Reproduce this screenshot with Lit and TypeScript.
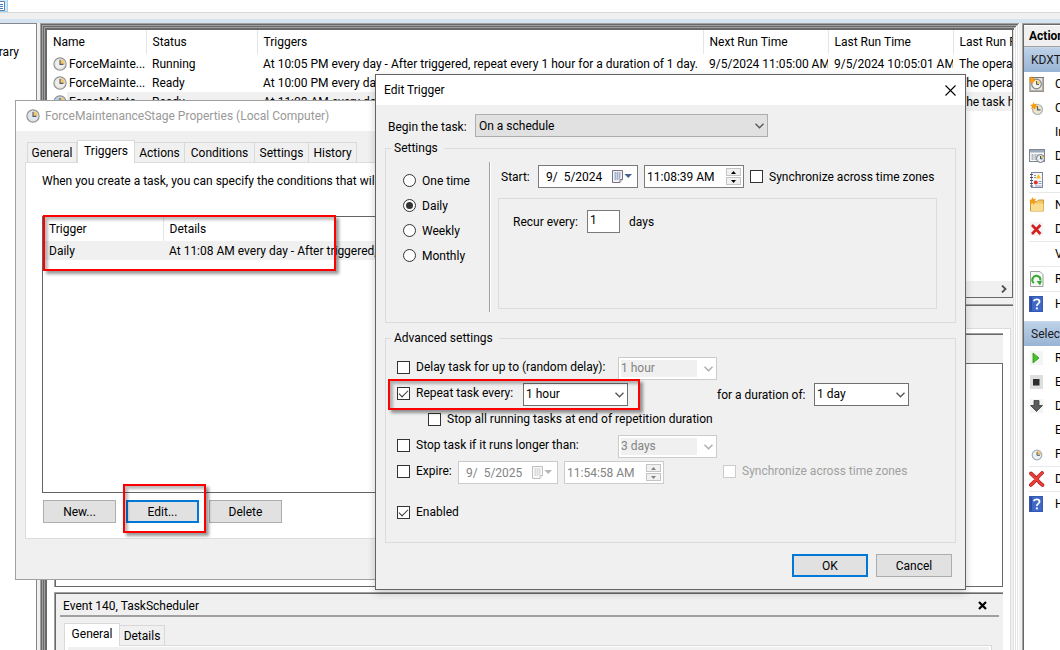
import { LitElement, html, css, svg, nothing } from "lit";
import { customElement, state } from "lit/decorators.js";
import { classMap } from "lit/directives/class-map.js";

const chevron = html`<svg class="chev" width="9" height="6" viewBox="0 0 9 6" aria-hidden="true"><path d="M.5 .8 4.5 4.8 8.5 .8" fill="none" stroke="currentColor" stroke-width="1.3"/></svg>`;

const clock = (face = "#f1efe8") => html`<svg width="14" height="14" viewBox="0 0 14 14" aria-hidden="true">
  <circle cx="7" cy="7" r="6.1" fill=${face} stroke="#8d8f92" stroke-width="1.2"/>
  <path d="M7 7V1.9A5.1 5.1 0 0 1 12.1 7Z" fill="#f4c66a"/>
  <circle cx="7" cy="7" r="4.9" fill="none" stroke="#d9dadb" stroke-width=".7"/>
  <path d="M7 3V7.4H10.4" fill="none" stroke="#4c5a70" stroke-width="1.1"/>
</svg>`;

const icon = (body: unknown) => html`<svg width="16" height="16" viewBox="0 0 16 16" aria-hidden="true">${body}</svg>`;
const spark = svg`<path d="M3.5 0 4.6 2.3 7 1.4 6 3.7 8 5 5.600 5.600 5 8 3.500 6 1 7 2 4.600 0 3 2.500 2.500Z" fill="#f59b14"/>`;
const help = icon(svg`<rect x=".5" y="0" width="13" height="16" fill="#3d68c8" stroke="#27459a" stroke-width=".8"/><path d="M1 1H3V15H1Z" fill="#2a4aa4"/><path d="M5 5.300C5 2.600 10.500 2.600 10.500 5.500 10.500 7.600 7.800 7.600 7.800 10" fill="none" stroke="#fff" stroke-width="1.800"/><rect x="6.900" y="11.400" width="1.900" height="2" fill="#fff"/>`);

const icons: Record<string, unknown> = {
  basic: icon(svg`<rect x="1" y="1.500" width="13.500" height="14" fill="#e9e6e1" stroke="#77716c"/><path d="M14 2V15H1" fill="none" stroke="#a79f97" stroke-width="1.500"/><circle cx="7.500" cy="8" r="4.800" fill="#f5f3ec" stroke="#7d8389" stroke-width="1.200"/><path d="M7.500 8V4.500A3.600 3.600 0 0 1 11 8Z" fill="#f4c66a"/><path d="M7.500 5V8.500H10" fill="none" stroke="#45607a"/><g transform="translate(-1 0)">${spark}</g>`),
  create: icon(svg`<circle cx="8.500" cy="9.500" r="5" fill="#f2e6c4" stroke="#a8b7c4" stroke-width="1.200"/><path d="M8.500 6V9.800H11.500" fill="none" stroke="#46617e" stroke-width="1.200"/><g transform="translate(1 2)">${spark}</g>`),
  running: icon(svg`<rect x=".5" y="1.500" width="15" height="12" fill="#f4f6f8" stroke="#7c8590"/><rect x="1" y="2" width="14" height="2.500" fill="#9aabbb"/><path d="M2.500 7H9M2.500 9H8M2.500 11H7" stroke="#737b84" stroke-dasharray="2 1"/><circle cx="11.500" cy="10.500" r="4" fill="#e9edf0" stroke="#6c7884"/><path d="M11.500 10.500V7.500A3 3 0 0 1 14.500 10.500Z" fill="#f4c66a"/><path d="M11.500 8V10.800H13.500" fill="none" stroke="#35506c"/>`),
  history: icon(svg`<rect x="2.500" y=".5" width="11" height="15" fill="#f7f8fb" stroke="#7b86a0"/><path d="M1 2.500H4M1 5.500H4M1 8.500H4M1 11.500H4M1 14H4" stroke="#4d5564"/><path d="M9.500 2 12 6.500H7Z" fill="#f5c322"/><circle cx="6.800" cy="10.500" r="2" fill="#d8352d"/><path d="M5 3.500H7M5 5.500H7M9.500 9.500H12.500M9.500 11.500H12.500M6 14H12.500" stroke="#8d9cbc"/>`),
  folder: icon(svg`<path d="M1.500 4.500H8L9.500 3H14.500V14H1.500Z" fill="#f1c865" stroke="#c99735"/><path d="M2 6.500H14.500V14H2Z" fill="#f9dc8d"/>${spark}`),
  remove: icon(svg`<rect x="1" y="1" width="13" height="14" fill="#f4f4f4"/><path d="M3 4 11.500 13M11.500 4 3 13" stroke="#d41f1f" stroke-width="2.600"/>`),
  refresh: icon(svg`<path d="M1.500 .5H11L14 3.500V15.500H1.500Z" fill="#f7f9f7" stroke="#9aa19a"/><path d="M5 12A4 4 0 1 1 11.300 9.500" fill="none" stroke="#3aa835" stroke-width="2"/><path d="M7.500 10H13L11 14.500Z" fill="#3aa835"/>`),
  help,
  run: icon(svg`<rect x="1" y="1" width="13" height="14" fill="#f4f4f4"/><path d="M4 3 10 8 4 13Z" fill="#45c22c" stroke="#2b961b" stroke-width=".8"/>`),
  end: icon(svg`<rect x="1" y="1" width="13" height="14" fill="#dedede"/><rect x="4" y="5" width="6.500" height="6.500" fill="#2d2d2d"/>`),
  disable: icon(svg`<rect x="1" y="1" width="13" height="14" fill="#f4f4f4"/><path d="M5 2.500H10V7.500H13.500L7.500 13.500 1.500 7.500H5Z" fill="#5c5c5c" stroke="#3d3d3d" stroke-width=".8"/>`),
  props: icon(svg`<circle cx="8" cy="9" r="4.800" fill="#eef1f3" stroke="#a3aebb" stroke-width="1.200"/><path d="M8 9V4.800A4.200 4.200 0 0 1 12.200 9Z" fill="#f4c66a"/><path d="M8 6V9.300H11" fill="none" stroke="#4a6480"/>`),
  del: icon(svg`<path d="M2 2.500Q5 5 7.500 8 10.500 12 13.500 14M13 2Q9.500 5 7 8.500 4.500 12 1.800 14" fill="none" stroke="#a51717" stroke-width="3.600" stroke-linecap="round"/><path d="M2 2.500Q5 5 7.500 8 10.500 12 13.500 14M13 2Q9.500 5 7 8.500 4.500 12 1.800 14" fill="none" stroke="#ea3f38" stroke-width="2.400" stroke-linecap="round"/>`),
};

type Action = { label: string; icon?: string; sep?: boolean };
const folderActions: Action[] = [
  { label: "Create Basic Task...", icon: "basic" },
  { label: "Create Task...", icon: "create" },
  { label: "Import Task..." },
  { label: "Display All Running Tasks", icon: "running" },
  { label: "Disable All Tasks History", icon: "history" },
  { label: "New Folder...", icon: "folder", sep: true },
  { label: "Delete Folder", icon: "remove" },
  { label: "View", sep: true },
  { label: "Refresh", icon: "refresh", sep: true },
  { label: "Help", icon: "help", sep: true },
];
const itemActions: Action[] = [
  { label: "Run", icon: "run" },
  { label: "End", icon: "end" },
  { label: "Disable", icon: "disable" },
  { label: "Export..." },
  { label: "Properties", icon: "props" },
  { label: "Delete", icon: "del", sep: true },
  { label: "Help", icon: "help", sep: true },
];

const tasks = [
  ["ForceMainte...", "Running", "At 10:05 PM every day - After triggered, repeat every 1 hour for a duration of 1 day.", "9/5/2024 11:05:00 AM", "9/5/2024 10:05:01 AM", "The operation"],
  ["ForceMainte...", "Ready", "At 10:00 PM every day", "", "", "The operation"],
  ["ForceMainte...", "Ready", "At 11:08 AM every day", "", "", "The task has"],
];

@customElement("app-root")
export class AppRoot extends LitElement {
  @state() private frequency = "Daily";

  static styles = css`
    :host {
      display: grid;
      grid-template-rows: 13px 6px 4px minmax(0, 1fr);
      height: 100vh;
      position: relative;
      overflow: hidden;
      background: #f0f0f0;
      color: #000;
      font: 12px/16px Roboto, "Open Sans", sans-serif;
      --line: #dcdcdc;
      --dark: #696969;
      --mid: #a0a0a0;
    }
    *, *::before, *::after { box-sizing: border-box; }
    button, input, select { font: inherit; color: inherit; margin: 0; border-radius: 0; }
    svg { display: block; flex: none; }
    table { border-collapse: collapse; table-layout: fixed; }
    th { font-weight: 400; text-align: left; }
    td, th { white-space: nowrap; overflow: hidden; }

    .toolbar { background: #fff; border-bottom: 1px solid #d9d9d9; }
    .toolbtn { display: block; width: 8px; height: 12px; padding: 0; border: solid #99d1ff; border-width: 0 1px 1px 0; background: #cce8ff; }
    .band { grid-row: 3; background: #d6e3f0; }
    .body { grid-row: 4; display: grid; grid-template-columns: 37px minmax(0, 1fr) 38px; gap: 3px; min-height: 0; }
    .body > * { min-width: 0; }

    .tree { background: #fff; border: solid #828790; border-width: 1px 1px 0 0; overflow: hidden; display: flex; justify-content: flex-end; padding: 20px 17px 0 0; }
    .center {
      display: flex; flex-direction: column; padding: 7px 6px 0 7px; min-height: 0; overflow: hidden;
      box-shadow: inset 1px 1px #a0a0a0, inset -1px 0 #fff, inset 2px 2px #696969, inset -2px 0 #e3e3e3,
        inset 3px 3px #a0a0a0, inset -3px 0 #fff, inset 4px 4px #696969, inset -4px 0 #e3e3e3,
        inset 5px 5px #a0a0a0, inset -5px 0 #fff, inset 7px 7px #696969, inset -6px 0 #e3e3e3;
    }
    .tasks { flex: none; height: 268px; background: #fff; border: solid var(--dark); border-width: 0 1px 1px 0; display: flex; flex-direction: column; overflow: hidden; }
    .tasks table { width: 1099px; }
    .tasks th { height: 24px; padding: 0 0 0 6px; border-right: 1px solid #e5e5e5; }
    .tasks td { height: 19px; padding: 0 0 0 6px; }
    .cell { display: flex; align-items: center; gap: 2px; }
    .picked td { background: #f0f0f0; }
    .picked .name { background: linear-gradient(90deg, #fff 20px, #f0f0f0 20px); }
    .hbar { margin-top: auto; height: 16px; background: #f0f0f0; display: flex; align-items: center; justify-content: flex-end; padding-right: 5px; color: #505050; }

    .detail { flex: 1; min-height: 0; margin-top: 6px; border-top: 1px solid var(--mid); box-shadow: inset 0 1px var(--dark); padding: 23px 2px 0 0; display: flex; }
    .page { flex: 1; min-width: 0; background: #fff; border: solid var(--line); border-width: 1px 1px 0 0; padding: 4px 7px 0; display: flex; flex-direction: column; gap: 5px; }
    .sunken { border: solid var(--mid); border-width: 1px 0 0 1px; box-shadow: inset 1px 1px var(--dark); background: #f0f0f0; }
    .log { flex: none; height: 254px; padding: 29px 0 0 1px; }
    .logbody { height: 100%; background: #fff; border: solid var(--dark); border-width: 1px 1px 1px 0; }
    .event { flex: 1; padding: 5px 4px 0 5px; display: flex; flex-direction: column; }
    .eventhead { display: flex; justify-content: space-between; align-items: center; padding: 0 12px 2px 3px; height: 19px; border-bottom: 2px solid var(--mid); }
    .plain { border: 0; background: none; padding: 0; display: grid; place-items: center; }

    .tabs { display: flex; align-items: flex-end; position: relative; }
    .tab { height: 20px; padding: 0; border: 1px solid #d9d9d9; border-width: 1px 1px 0 0; background: #f0f0f0; text-align: center; white-space: nowrap; }
    .tab:first-child { border-left-width: 1px; }
    .tab.on { height: 23px; margin-bottom: -1px; background: #fff; border-left-width: 1px; padding-bottom: 2px; }
    .event .tabs { padding: 6px 0 0 4px; }
    .eventpage { flex: 1; margin: 0 7px 0 4px; border: 1px solid #d9d9d9; border-bottom: 0; background: #fff; padding: 1px 2px 0 3px; }
    .eventpage div { background: #f0f0f0; height: 10px; }

    .actions { background: #fff; border: solid var(--mid); border-width: 1px 0 0 1px; box-shadow: inset 1px 1px var(--dark); padding: 2px 0 0 1px; overflow: hidden; white-space: nowrap; }
    .acthead { height: 21px; padding: 2px 0 0 5px; margin: 0; background: #f0f0f0; border-bottom: 1px solid var(--mid); font-weight: 700; font-size: 12px; }
    .group { height: 25px; padding: 4px 0 0 7px; margin: 0; background: linear-gradient(#bdd1e8, #98b4d4); font-size: 12px; font-weight: 400; color: #1a1a1a; border-top: 1px solid #c8d8ea; }
    .list { list-style: none; margin: 0 0 5px; padding: 0 0 0 5px; }
    .list .sep { border-top: 1px solid #e8e8e8; }
    .act { display: grid; grid-template-columns: 16px max-content; gap: 10px; align-items: center; height: 24px; padding: 0; border: 0; background: none; }
    .act span { grid-column: 2; }

    .win { position: absolute; display: flex; flex-direction: column; background: #f0f0f0; }
    .props { left: 15px; top: 100px; width: 640px; height: 480px; border: 1px solid #a0a0a0; }
    .edit { left: 375px; top: 74px; width: 591px; border: 1px solid #646464; box-shadow: 0 3px 8px #0003; }
    .title { display: flex; align-items: center; height: 30px; padding: 0 9px 0 8px; background: #fff; gap: 5px; }
    .title h2 { margin: 0; font: inherit; flex: 1; }
    .props .title { color: #999; padding-left: 10px; }
    .propsbody { flex: 1; padding: 9px 9px 40px; display: flex; flex-direction: column; }
    .propsbody .tabs { padding-left: 2px; }
    .proppage { flex: 1; border: 1px solid var(--line); background: #fff; padding: 10px 16px 15px; display: flex; flex-direction: column; }
    .proppage p { margin: 0 0 27px; }
    .trig { flex: 1; border: 1px solid #646464; }
    .trig table { width: 100%; }
    .trig th { height: 24px; padding: 0 6px; border-right: 1px solid #e5e5e5; }
    .trig td { height: 19px; padding: 0 6px; background: #f0f0f0; }
    .row { display: flex; gap: 10px; margin-top: 7px; padding-left: 1px; }
    .btn { height: 23px; padding: 0; border: 1px solid #adadad; background: #e1e1e1; }
    .btn.main { border: 2px solid #0078d7; }
    .row .btn { width: 73px; }

    .editbody { padding: 9px 9px 12px; display: flex; flex-direction: column; }
    .line { display: flex; align-items: center; }
    .lead { padding-left: 3px; }
    .lead .lbl { width: 87px; padding-top: 2px; white-space: nowrap; }
    fieldset { border: 1px solid var(--line); margin: 3px 0 0; padding: 0; min-width: 0; }
    legend { padding: 0 6px 0 3px; margin-left: 5px; height: 16px; }
    .when { height: 183px; }
    .more { height: 213px; margin-top: 7px; }
    .settings { display: flex; height: 166px; padding: 6px 18px 10px 16px; gap: 8px; }
    .advanced { display: flex; flex-direction: column; gap: 3px; padding: 11px 0 0 11px; }
    .freq { width: 88px; padding: 6px 0 0 1px; border-right: 1px solid var(--mid); box-shadow: 1px 0 #fff; }
    .opt { display: flex; align-items: center; gap: 6px; height: 25px; }
    .plan { flex: 1; min-width: 0; padding: 3px 0 0; }
    .plan .line { gap: 6px; }
    .plan .lbl { width: 31px; }
    .startline { padding-left: 3px; }
    .recur { height: 111px; margin-top: 10px; border: 1px solid var(--line); padding: 11px 14px; }
    .recur .line { gap: 9px; }
    .recur .lbl { width: 65px; white-space: nowrap; }
    .startline .check { padding: 0; }

    input[type="radio"], input[type="checkbox"] { appearance: none; width: 13px; height: 13px; flex: none; background: #fff; border: 1px solid #333; display: grid; place-items: center; }
    input[type="radio"] { border-radius: 50%; }
    input[type="radio"]:checked::before { content: ""; width: 7px; height: 7px; border-radius: 50%; background: #333; }
    input[type="checkbox"]:checked::before { content: ""; width: 9px; height: 5px; border: solid #333; border-width: 0 0 1px 1px; transform: translateY(-1px) rotate(-45deg); }
    input[type="checkbox"]:disabled { border-color: #ccc; }
    .check { display: flex; align-items: center; gap: 6px; white-space: nowrap; padding-bottom: 3px; }
    .off { color: #a0a0a0; }
    .wide { width: 221px; }
    .mid { width: 126px; }
    .short { width: 61px; }
    .indent { padding-left: 31px; }
    .far { margin-left: 89px; width: 97px; white-space: nowrap; }
    .away { margin-left: 59px; }
    .advanced .line { height: 23px; }
    .last { margin-top: 15px; }

    .combo { display: grid; align-items: center; height: 23px; }
    .combo select { grid-area: 1 / 1; appearance: none; width: 100%; height: 23px; padding: 0 20px 2px 2px; border: 1px solid #707070; background: #fff; outline: 0; opacity: 1; }
    .combo .chev { grid-area: 1 / 1; justify-self: end; margin-right: 4px; pointer-events: none; color: #555; }
    .combo.gray select { border-color: #adadad; background: #e1e1e1; padding: 0 20px 0 3px; }
    .combo.dis select { border-color: #ccc; color: #838383; background: linear-gradient(#f0f0f0, #f0f0f0) no-repeat 2px 2px / calc(100% - 21px) 17px #fff; }
    .combo.dis .chev { color: #aaa; }
    .w293 { width: 293px; }
    .w105 { width: 105px; }
    .w99 { width: 99px; }
    .w95 { width: 95px; }

    .field { display: flex; align-items: center; width: 100px; height: 23px; border: 1px solid #7a7a7a; background: #fff; flex: none; }
    .field input { flex: 1; min-width: 0; width: 0; height: 21px; border: 0; background: none; padding: 0 0 0 2px; outline: 0; }
    .date input { padding-left: 7px; }
    .field.dis { border-color: #ccc; color: #838383; }
    .field.dis .plain { opacity: .45; filter: grayscale(1); }
    .date .plain { padding-right: 5px; }
    .num { width: 33px; height: 23px; border: 1px solid #7a7a7a; background: #fff; padding: 0 0 4px 2px; }
    .adv-gap { margin-left: 6px; }
    .spin { display: grid; gap: 1px; padding-right: 2px; }
    .spin button { width: 15px; height: 8px; padding: 0; display: grid; place-items: center; border: 1px solid #c4c4c4; background: #f0f0f0; }
    .foot { display: flex; justify-content: flex-end; gap: 8px; margin-top: 11px; padding-right: 4px; }
    .foot .btn { width: 76px; }

    .mark { position: absolute; border: 2px solid #f00; box-shadow: 3px 3px 3px #0006, inset 3px 3px 3px #0004; pointer-events: none; }
    .m1 { left: 43px; top: 215px; width: 293px; height: 56px; }
    .m2 { left: 123px; top: 484px; width: 83px; height: 49px; }
    .m3 { left: 388px; top: 379px; width: 252px; height: 31px; }
  `;

  private combo(label: string, value: string, size: string, kind = "") {
    return html`<span class="combo ${size} ${kind}">
      <select aria-label=${label} ?disabled=${kind === "dis"}><option>${value}</option></select>${chevron}
    </span>`;
  }

  private date(label: string, value: string, off = false) {
    return html`<span class="field date ${off ? "dis" : ""}">
      <input type="text" aria-label=${label} .value=${value} ?disabled=${off} />
      <button class="plain" aria-label="Open calendar" ?disabled=${off}>
        <svg width="20" height="13" viewBox="0 0 20 13">
          <path d="M.5 .5H10.500V9.500L8 12.500H.5Z" fill="#f3f1f4" stroke="#77717b"/>
          <path d="M8 12.500V9.500H10.500" fill="#fff" stroke="#77717b"/>
          <path d="M2 3H9M2 5H9M2 7H9M2 9H7M3.500 2V10M5.500 2V10M7.500 2V9" stroke="#9db0cd" stroke-width=".9"/>
          <path d="M12.500 4H20L16.200 8Z" fill="#44618f"/>
        </svg>
      </button>
    </span>`;
  }

  private time(label: string, value: string, off = false, gap = false) {
    return html`<span class="field ${off ? "dis" : ""} ${gap ? "adv-gap" : ""}">
      <input type="text" aria-label=${label} .value=${value} ?disabled=${off} />
      <span class="spin">
        <button aria-label="Up" ?disabled=${off}><svg width="5" height="3" viewBox="0 0 5 3"><path d="M0 3 2.500 0 5 3Z" fill="currentColor"/></svg></button>
        <button aria-label="Down" ?disabled=${off}><svg width="5" height="3" viewBox="0 0 5 3"><path d="M0 0 2.500 3 5 0Z" fill="currentColor"/></svg></button>
      </span>
    </span>`;
  }

  private check(label: string, size = "", checked = false, off = false) {
    return html`<label class="check ${size} ${off ? "off" : ""}"><input type="checkbox" .checked=${checked} ?disabled=${off} />${label}</label>`;
  }

  private tab(label: string, width: number, on = false) {
    return html`<button role="tab" aria-selected=${on} class=${classMap({ tab: true, on })} style="width:${width}px">${label}</button>`;
  }

  private actionList(items: Action[]) {
    return html`<ul class="list">
      ${items.map((a) => html`<li class=${a.sep ? "sep" : ""}><button class="act">${a.icon ? icons[a.icon] : nothing}<span>${a.label}</span></button></li>`)}
    </ul>`;
  }

  render() {
    return html`
      <div class="toolbar"><button class="toolbtn" aria-label="Show pane">
        <svg width="6" height="10" viewBox="0 0 6 10"><path d="M0 .5H4.500V9.500H0" fill="#fff" stroke="#6f7f93"/><path d="M0 3.500H3M0 5.500H3M0 7.500H3" stroke="#3c7cc0"/></svg>
      </button></div>
      <div class="band"></div>
      <div class="body">
        <nav class="tree">Library</nav>
        <main class="center">
          <section class="tasks">
            <table>
              <colgroup><col width="99" /><col width="111" /><col width="446" /><col width="125" /><col width="125" /><col width="193" /></colgroup>
              <thead><tr>${["Name", "Status", "Triggers", "Next Run Time", "Last Run Time", "Last Run Result"].map((h) => html`<th>${h}</th>`)}</tr></thead>
              <tbody>${tasks.map((t, i) => html`<tr class=${i === 2 ? "picked" : ""}>
                ${t.map((c, j) => j === 0 ? html`<td class="name"><div class="cell">${clock(i === 2 ? "#a9cfee" : undefined)}${c}</div></td>` : html`<td>${c}</td>`)}
              </tr>`)}</tbody>
            </table>
            <div class="hbar"><svg width="6" height="8" viewBox="0 0 6 8"><path d="M1 .5 4.500 4 1 7.500" fill="none" stroke="currentColor" stroke-width="1.800"/></svg></div>
          </section>
          <section class="detail"><div class="page">
            <div class="sunken log"><div class="logbody"></div></div>
            <div class="sunken event">
              <div class="eventhead"><span>Event 140, TaskScheduler</span>
                <button class="plain" aria-label="Close event"><svg width="9" height="9" viewBox="0 0 9 9"><path d="M1 1 8 8M8 1 1 8" stroke="#000" stroke-width="2.200"/></svg></button>
              </div>
              <div class="tabs" role="tablist">${this.tab("General", 56, true)}${this.tab("Details", 45)}</div>
              <div class="eventpage"><div></div></div>
            </div>
          </div></section>
        </main>
        <aside class="actions">
          <h2 class="acthead">Actions</h2>
          <h3 class="group">KDXT</h3>
          ${this.actionList(folderActions)}
          <h3 class="group">Selected Item</h3>
          ${this.actionList(itemActions)}
        </aside>
      </div>

      <section class="win props">
        <header class="title">${clock("#dfe8ee")}<h2>ForceMaintenanceStage Properties (Local Computer)</h2></header>
        <div class="propsbody">
          <div class="tabs" role="tablist">
            ${this.tab("General", 50)}${this.tab("Triggers", 58, true)}${this.tab("Actions", 50)}${this.tab("Conditions", 70)}${this.tab("Settings", 54)}${this.tab("History", 48)}
          </div>
          <div class="proppage">
            <p>When you create a task, you can specify the conditions that will</p>
            <div class="trig"><table>
              <colgroup><col width="120" /><col /></colgroup>
              <thead><tr><th>Trigger</th><th>Details</th></tr></thead>
              <tbody><tr><td>Daily</td><td>At 11:08 AM every day - After triggered, repeat</td></tr></tbody>
            </table></div>
            <div class="row"><button class="btn">New...</button><button class="btn main">Edit...</button><button class="btn">Delete</button></div>
          </div>
        </div>
      </section>

      <div class="mark m1"></div>
      <div class="mark m2"></div>

      <section class="win edit" role="dialog" aria-label="Edit Trigger">
        <header class="title"><h2>Edit Trigger</h2>
          <button class="plain" aria-label="Close"><svg width="11" height="11" viewBox="0 0 11 11"><path d="M.5 .5 10.500 10.500M10.500 .5 .5 10.500" stroke="#000" stroke-width="1.100"/></svg></button>
        </header>
        <div class="editbody">
          <div class="line lead"><span class="lbl">Begin the task:</span>${this.combo("Begin the task", "On a schedule", "w293", "gray")}</div>
          <fieldset class="when"><legend>Settings</legend>
            <div class="settings">
              <div class="freq">
                ${["One time", "Daily", "Weekly", "Monthly"].map((f) => html`<label class="opt"><input type="radio" name="freq" .checked=${this.frequency === f} @change=${() => (this.frequency = f)} />${f}</label>`)}
              </div>
              <div class="plan">
                <div class="line startline"><span class="lbl">Start:</span>${this.date("Start date", "9/  5/2024")}${this.time("Start time", "11:08:39 AM")}${this.check("Synchronize across time zones")}</div>
                <div class="recur"><div class="line"><label class="lbl" for="days">Recur every:</label><input class="num" id="days" type="text" value="1" /><span>days</span></div></div>
              </div>
            </div>
          </fieldset>
          <fieldset class="more"><legend>Advanced settings</legend>
            <div class="advanced">
              <div class="line">${this.check("Delay task for up to (random delay):", "wide")}${this.combo("Delay", "1 hour", "w99", "dis")}</div>
              <div class="line">${this.check("Repeat task every:", "mid", true)}${this.combo("Repeat interval", "1 hour", "w105")}<span class="far">for a duration of:</span>${this.combo("Duration", "1 day", "w95")}</div>
              <div class="line indent">${this.check("Stop all running tasks at end of repetition duration")}</div>
              <div class="line">${this.check("Stop task if it runs longer than:", "wide")}${this.combo("Longest run", "3 days", "w99", "dis")}</div>
              <div class="line">${this.check("Expire:", "short")}${this.date("Expiry date", "9/  5/2025", true)}${this.time("Expiry time", "11:54:58 AM", true, true)}${this.check("Synchronize across time zones", "away", false, true)}</div>
              <div class="line last">${this.check("Enabled", "", true)}</div>
            </div>
          </fieldset>
          <div class="foot"><button class="btn main">OK</button><button class="btn">Cancel</button></div>
        </div>
      </section>
      <div class="mark m3"></div>
    `;
  }
}
